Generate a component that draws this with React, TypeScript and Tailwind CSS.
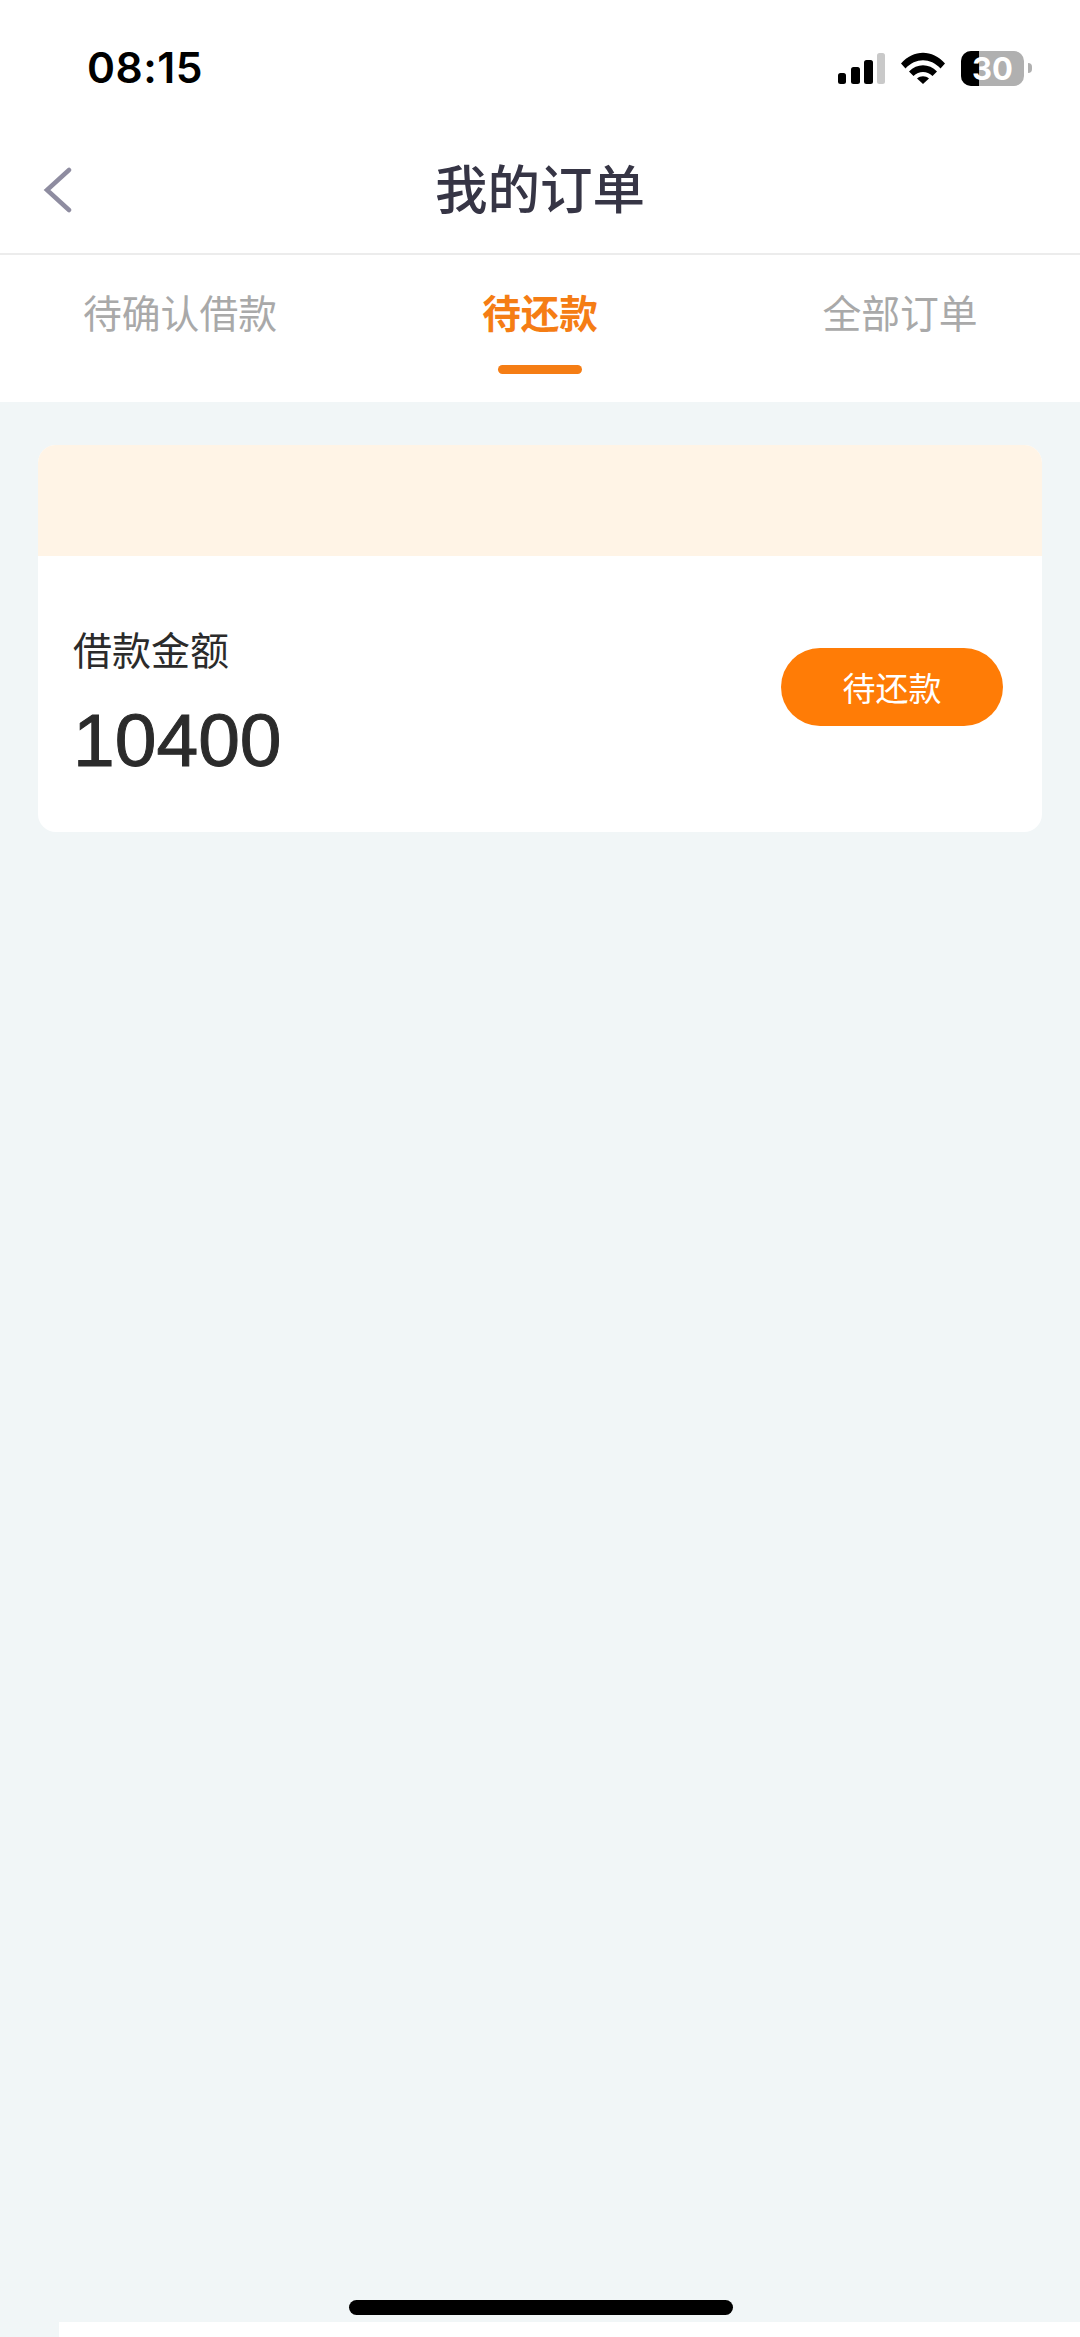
const cjk = "font-['Noto_Sans_CJK_SC','Noto_Sans',sans-serif]"

function StatusIcons() {
  return (
    <div className="flex items-center gap-[16px]">
      <svg width="47" height="31" viewBox="0 0 47 31">
        <rect x="0" y="20" width="8" height="11" rx="2.5" fill="#000" />
        <rect x="13" y="14" width="9" height="17" rx="2.5" fill="#000" />
        <rect x="26" y="7" width="9" height="24" rx="2.5" fill="#000" />
        <rect x="39" y="0" width="8" height="31" rx="2.5" fill="#c9c9c9" />
      </svg>
      <svg width="44" height="32" viewBox="0 0 44 32">
        <path d="M0 11.5 C12.5 -3 31.5 -3 44 11.5 L39.5 16.5 C29.5 5.5 14.5 5.5 4.5 16.5 Z" fill="#000" />
        <path d="M8 19.5 C16 11 28 11 36 19.5 L31.5 24 C26 18.5 18 18.5 12.5 24 Z" fill="#000" />
        <path d="M16 26.5 C19.5 23.5 24.5 23.5 28 26.5 L22 32 Z" fill="#000" />
      </svg>
      <div className="flex items-center gap-[4px]">
        <div className="relative h-[35px] w-[63px] overflow-hidden rounded-[10px] bg-[#b0b0b0]">
          <div className="h-full w-[18px] bg-black" />
          <span className="absolute inset-0 flex items-center justify-center font-['Inter',sans-serif] text-[31px] leading-none font-bold text-white">
            30
          </span>
        </div>
        <div className="h-[10px] w-[4px] rounded-r-full bg-[#b0b0b0]" />
      </div>
    </div>
  )
}

function Tab({ label, active }: { label: string; active?: boolean }) {
  return (
    <div className="relative flex flex-1 items-center justify-center pb-[35px]">
      <span className={active ? "text-[38.6px] leading-none font-semibold text-[#f57d14]" : "text-[38.8px] leading-none text-[#a9a9a9]"}>
        {label}
      </span>
      {active && <div className="absolute bottom-[28px] h-[9px] w-[84px] rounded-full bg-[#f57d14]" />}
    </div>
  )
}

export default function App() {
  return (
    <div className={`relative flex h-[2337px] w-[1080px] flex-col overflow-hidden bg-[#f1f6f7] ${cjk}`}>
      <div className="bg-white">
        <div className="flex h-[136px] items-center justify-between pr-[48px] pl-[87px]">
          <span className="font-['Inter',sans-serif] text-[42.5px] leading-none font-semibold tracking-[0.5px] text-black">08:15</span>
          <StatusIcons />
        </div>
        <div className="relative flex h-[117px] items-start justify-center">
          <svg className="absolute top-[31px] left-[42px]" width="32" height="46" viewBox="0 0 32 46" fill="none">
            <path d="M27 3 L5 23 L27 43" stroke="#8e8ca0" strokeWidth="4.5" strokeLinecap="round" />
          </svg>
          <h1 className="pt-[24px] text-[52.5px] leading-none font-medium text-[#363545]">我的订单</h1>
        </div>
        <div className="h-[2px] bg-[#ececec]" />
        <div className="flex h-[147px]">
          <Tab label="待确认借款" />
          <Tab label="待还款" active />
          <Tab label="全部订单" />
        </div>
      </div>

      <div className="mx-[38px] mt-[43px] overflow-hidden rounded-[18px] bg-white">
        <div className="h-[111px] bg-[#fff4e6]" />
        <div className="flex h-[276px] items-center justify-between pr-[39px] pl-[35px]">
          <div className="flex flex-col gap-[35px] pt-[18px]">
            <span className="text-[39px] leading-none text-[#2b2b2b]">借款金额</span>
            <span className="font-['Liberation_Sans',sans-serif] text-[75px] leading-none text-[#2b2b2b] [-webkit-text-stroke:1px_#2b2b2b]">10400</span>
          </div>
          <div className="mb-[14px] flex h-[78px] w-[222px] items-center justify-center rounded-full bg-[#ff7c06] text-[33px] leading-none text-white">
            待还款
          </div>
        </div>
      </div>

      <div className="mt-auto ml-[59px] h-[15px] bg-white" />
      <div className="absolute bottom-[22px] left-[349px] h-[15px] w-[384px] rounded-full bg-black" />
    </div>
  )
}
